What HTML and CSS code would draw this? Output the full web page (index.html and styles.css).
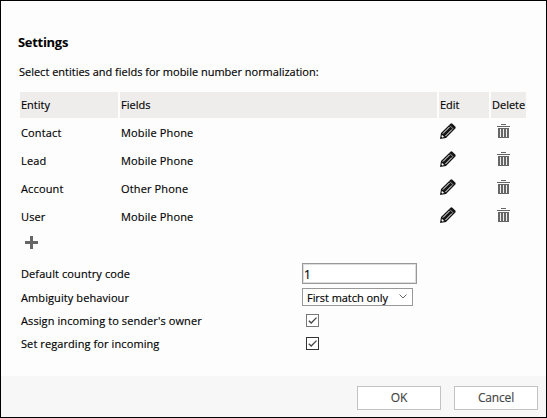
FILE: index.html
```html
<!DOCTYPE html>
<html lang="en">
<head>
<meta charset="utf-8">
<title>Settings</title>
<link rel="stylesheet" href="styles.css">
</head>
<body>
<svg class="defs" width="0" height="0">
  <symbol id="pencil" viewBox="0 0 16 16">
    <path d="M0 16 1 10 10.2.9Q11.2-.1 12.4.7L15.3 3.6Q16.1 4.8 15.1 5.8L6 14.9Z" fill="#151515"/>
    <path d="M2.9 10.6 9.6 3.9M5.4 13.1 12.1 6.4" stroke="#fff" stroke-width="1"/>
    <path d="M10 2.7 13.3 6" stroke="#bbb" stroke-width=".8"/>
    <path d="M1.9 11.8 4.2 14.1 2.2 14.5 1.5 13.8Z" fill="#fff"/>
  </symbol>
  <symbol id="trash" viewBox="0 0 13 14">
    <path d="M4 0h5v1H4zM0 2h13v1H0zM1 4h11v10H1z" fill="#666"/>
    <path d="M3.5 5v8M6.5 5v8M9.5 5v8" stroke="#eee"/>
  </symbol>
  <symbol id="check" viewBox="0 0 13 13">
    <path d="M2.8 6.7 5.2 9 10.5 3.6" fill="none" stroke="#444" stroke-width="1.3"/>
  </symbol>
</svg>
<div class="dialog">
  <main class="content">
    <h1>Settings</h1>
    <p class="intro">Select entities and fields for mobile number normalization:</p>
    <table class="entities">
      <thead><tr><th class="entity">Entity</th><th class="fields">Fields</th><th class="edit">Edit</th><th class="delete">Delete</th></tr></thead>
      <tbody>
        <tr><td>Contact</td><td>Mobile Phone</td><td><svg class="pencil"><use href="#pencil"/></svg></td><td><svg class="trash"><use href="#trash"/></svg></td></tr>
        <tr><td>Lead</td><td>Mobile Phone</td><td><svg class="pencil"><use href="#pencil"/></svg></td><td><svg class="trash"><use href="#trash"/></svg></td></tr>
        <tr><td>Account</td><td>Other Phone</td><td><svg class="pencil"><use href="#pencil"/></svg></td><td><svg class="trash"><use href="#trash"/></svg></td></tr>
        <tr><td>User</td><td>Mobile Phone</td><td><svg class="pencil"><use href="#pencil"/></svg></td><td><svg class="trash"><use href="#trash"/></svg></td></tr>
      </tbody>
    </table>
    <svg class="add" viewBox="0 0 13 13"><path d="M5 0h3v5h5v3H8v5H5V8H0V5h5z" fill="#666"/></svg>
    <div class="options">
      <div class="row code"><span class="label">Default country code</span><span class="input">1</span></div>
      <div class="row ambiguity"><span class="label">Ambiguity behaviour</span><span class="select">First match only<svg class="chevron" viewBox="0 0 8 5"><path d="M.5.5 4 4 7.5.5" fill="none" stroke="#666"/></svg></span></div>
      <div class="row assign"><span class="label">Assign incoming to sender's owner</span><span class="checkbox"><svg><use href="#check"/></svg></span></div>
      <div class="row regarding"><span class="label">Set regarding for incoming</span><span class="checkbox dark"><svg><use href="#check"/></svg></span></div>
    </div>
  </main>
  <footer><button>OK</button><button>Cancel</button></footer>
</div>
</body>
</html>
```
FILE: styles.css
```css
* { box-sizing: border-box; }
body { margin: 0; font: 11px/15px "Open Sans", "Noto Sans", sans-serif; color: #000; -webkit-text-stroke: .15px currentColor; }
.defs { position: absolute; }
svg { display: block; }
.dialog { width: 547px; height: 418px; border: 1px solid #000; background: #fdfdfd; display: flex; flex-direction: column; }
.content { flex: 1; padding: 32px 0 0 17px; }
h1 { margin: 0; font-size: 13px; line-height: 18px; font-weight: 700; letter-spacing: -.3px; -webkit-text-stroke: 0; }
.intro { margin: 13px 0 0; padding-left: 1px; line-height: 16px; white-space: nowrap; letter-spacing: -.01px; }
.entities { margin-top: 10px; width: 510px; table-layout: fixed; border-collapse: separate; border-spacing: 2px; }
th, td { height: 26px; padding: 0 1px 2px; text-align: left; font-weight: 400; white-space: nowrap; vertical-align: middle; }
td { letter-spacing: .14px; }
th { background: #efedec; }
.entity { width: 98px; }
.fields { width: 317px; }
.edit { width: 50px; }
.delete { width: 35px; }
.pencil { width: 16px; height: 16px; margin-top: -2px; }
.trash { width: 13px; height: 14px; margin: -2px 0 0 5px; }
.add { width: 13px; height: 13px; margin: 4px 0 0 7px; }
.options { margin: 14px 0 0 3px; }
.row { display: flex; align-items: center; }
.label { width: 281px; white-space: nowrap; letter-spacing: .09px; }
.code { height: 21px; }
.ambiguity { height: 18px; margin-top: 4px; }
.assign { height: 15px; margin-top: 7px; }
.regarding { height: 15px; margin-top: 8px; }
.input { width: 115px; height: 21px; border: 1px solid #999; box-shadow: inset 0 0 0 1px #ddd; background: #fff; padding: 3px 1px; font-size: 12px; }
.select { width: 111px; height: 18px; border: 1px solid #999; background: #fff; padding: 0 5px 0 4px; display: flex; align-items: center; justify-content: space-between; white-space: nowrap; letter-spacing: -.05px; }
.chevron { width: 8px; height: 5px; margin-top: -1px; }
.checkbox { width: 13px; height: 13px; margin-left: 4px; outline: 1px solid #777; outline-offset: -1px; background: #fff; }
.checkbox.dark { outline-color: #333; }
.checkbox svg { width: 13px; height: 13px; }
footer { height: 41px; background: #f7f7f7; display: flex; justify-content: flex-end; gap: 13px; padding: 10px 8px 0 0; }
button { width: 84px; height: 24px; border: 1px solid #c3c3c3; background: #fff; color: #444; font: 12px/16px "Open Sans", sans-serif; padding: 0; letter-spacing: -.15px; }
```
